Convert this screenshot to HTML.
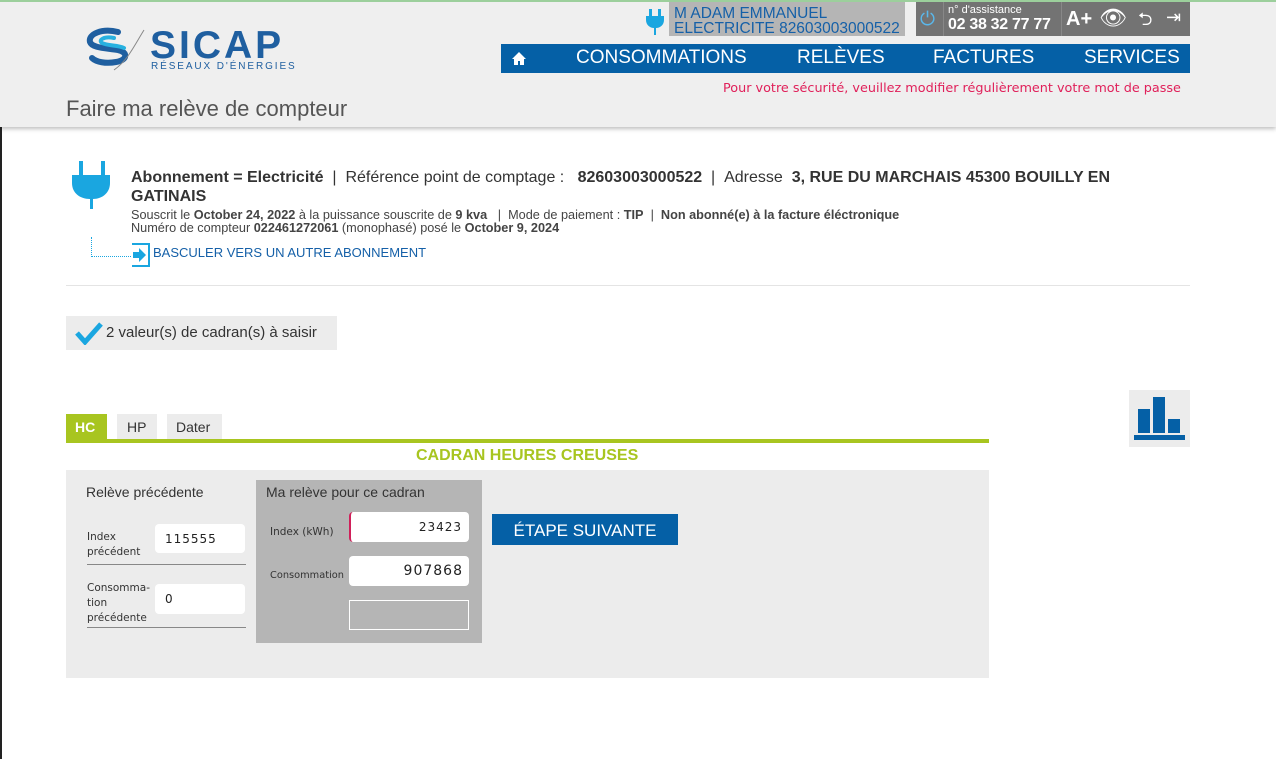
<!DOCTYPE html>
<html><head><meta charset="utf-8"><style>
*{margin:0;padding:0;box-sizing:border-box}
body{width:1276px;height:759px;background:#fff;font-family:"Liberation Sans",Arial,sans-serif;position:relative;overflow:hidden;color:#333}
.a{position:absolute}
#hdr{left:0;top:0;width:1276px;height:127px;background:#efefef;border-top:2px solid #9ccf9c;box-shadow:0 2px 4px rgba(0,0,0,.25)}
.nav{left:501px;top:44px;width:689px;height:29px;background:#0560a6;color:#fff;font-size:19px}
.nav span{position:absolute;top:3px}
.bl{left:0;top:127px;width:2px;height:632px;background:#222}
.inp{background:#fff;border-radius:4px;font-family:"DejaVu Sans",sans-serif;font-size:12px;color:#222;letter-spacing:1px}
</style></head><body>
<div id="hdr" class="a"></div>
<div class="a bl"></div>
<!-- logo -->
<svg class="a" style="left:84px;top:26px" width="70" height="46" viewBox="0 0 70 46">
<path d="M34 6 C18 2 4 8 6 16 C8 22 22 22 34 24 C44 26 44 34 32 36 C22 38 12 36 8 32" fill="none" stroke="#1f5fa0" stroke-width="6" stroke-linecap="round"/>
<path d="M30 12 C20 10 14 14 18 17 C24 20 34 19 40 22" fill="none" stroke="#27b1e0" stroke-width="4" stroke-linecap="round"/>
<path d="M60 4 C50 20 44 34 30 44" fill="none" stroke="#888" stroke-width="1"/>
</svg>
<div class="a" style="left:150px;top:24px;font-size:39px;color:#1f5fa0;letter-spacing:3px;font-weight:bold">SICAP</div>
<div class="a" style="left:151px;top:61px;font-size:10px;color:#1f5fa0;letter-spacing:1.9px">RÉSEAUX D'ÉNERGIES</div>
<div class="a" style="left:66px;top:96px;font-size:22px;color:#555">Faire ma relève de compteur</div>
<!-- plug small -->
<svg class="a" style="left:645px;top:9px" width="20" height="26" viewBox="0 0 20 26"><rect x="4" y="0" width="3" height="7" fill="#1aa6e0"/><rect x="13" y="0" width="3" height="7" fill="#1aa6e0"/><path d="M1 7h18v4c0 5-4 8-8 8v7h-2v-7c-4 0-8-3-8-8z" fill="#1aa6e0"/></svg>
<div class="a" style="left:669px;top:2px;width:236px;height:34px;background:#b5b5b5;color:#1560a8;font-size:15.5px;line-height:15px;padding:4px 0 0 5px">M ADAM EMMANUEL<br>ELECTRICITE 82603003000522</div>
<div class="a" style="left:916px;top:2px;width:274px;height:34px;background:#737373;color:#fff">
<div class="a" style="left:4px;top:7px;font-size:19px;color:#5ab8ec">⏻</div>
<div class="a" style="left:27px;top:0;width:1px;height:34px;background:#888"></div>
<div class="a" style="left:32px;top:2px;font-size:11px">n° d'assistance</div>
<div class="a" style="left:32px;top:14px;font-size:16px;font-weight:bold;letter-spacing:-0.3px">02 38 32 77 77</div>
<div class="a" style="left:145px;top:0;width:1px;height:34px;background:#888"></div>
<div class="a" style="left:150px;top:6px;font-size:20px;font-weight:bold">A+</div>
<div class="a" style="left:183px;top:3px;font-size:22px">👁</div>
<div class="a" style="left:222px;top:5px;font-size:18px">⮌</div>
<div class="a" style="left:250px;top:5px;font-size:18px">⇥</div>
</div>
<div class="a nav">
<svg class="a" style="left:11px;top:8px" width="14" height="13" viewBox="0 0 14 13"><path d="M7 0L0 7h2v6h4V9h2v4h4V7h2z" fill="#fff"/></svg>
<span style="left:75px">CONSOMMATIONS</span><span style="left:296px">RELÈVES</span><span style="left:432px">FACTURES</span><span style="left:583px">SERVICES</span></div>
<div class="a" style="left:723px;top:81px;color:#e0205a;font-family:'DejaVu Sans',sans-serif;font-size:12.8px">Pour votre sécurité, veuillez modifier régulièrement votre mot de passe</div>
<!-- subscription -->
<svg class="a" style="left:72px;top:161px" width="40" height="50" viewBox="0 0 40 50"><rect x="7" y="0" width="4" height="14" fill="#1aa6e0"/><rect x="29" y="0" width="4" height="14" fill="#1aa6e0"/><path d="M0 14h38v8c0 10-8 16-17 16v10h-3V38C8 38 0 32 0 22z" fill="#1aa6e0"/></svg>
<div class="a" style="left:131px;top:168px;width:1000px;font-size:16px;line-height:19px;color:#333"><b>Abonnement = Electricité</b> &nbsp;| &nbsp;Référence point de comptage : &nbsp;&nbsp;<b>82603003000522</b> &nbsp;| &nbsp;Adresse &nbsp;<b>3, RUE DU MARCHAIS 45300 BOUILLY EN<br>GATINAIS</b></div>
<div class="a" style="left:131px;top:209px;font-size:12.7px;line-height:13px;color:#444;white-space:nowrap">Souscrit le <b>October 24, 2022</b> à la puissance souscrite de <b>9 kva</b> &nbsp; | &nbsp;Mode de paiement : <b>TIP</b> &nbsp;| &nbsp;<b>Non abonné(e) à la facture éléctronique</b><br>Numéro de compteur <b>022461272061</b> (monophasé) posé le <b>October 9, 2024</b></div>
<div class="a" style="left:91px;top:237px;width:40px;height:20px;border-left:1px dotted #1aa6e0;border-bottom:1px dotted #1aa6e0"></div>
<svg class="a" style="left:130px;top:243px" width="22" height="24" viewBox="0 0 22 24"><path d="M2 1h17v22H2" fill="none" stroke="#1aa6e0" stroke-width="2"/><path d="M3 9h6V5l7 7-7 7v-4H3z" fill="#1aa6e0"/></svg>
<div class="a" style="left:153px;top:245px;font-size:13px;color:#1560a8">BASCULER VERS UN AUTRE ABONNEMENT</div>
<div class="a" style="left:66px;top:285px;width:1124px;height:1px;background:#e4e4e4"></div>
<div class="a" style="left:66px;top:316px;width:271px;height:34px;background:#ececec;font-size:15px;padding:8px 0 0 40px">2 valeur(s) de cadran(s) à saisir</div>
<svg class="a" style="left:75px;top:321px" width="28" height="24" viewBox="0 0 28 24"><path d="M2 12l8 9L26 3" fill="none" stroke="#1aa6e0" stroke-width="5"/></svg>
<!-- chart icon -->
<div class="a" style="left:1129px;top:390px;width:61px;height:57px;background:#ececec"></div>
<div class="a" style="left:1138px;top:409px;width:12px;height:24px;background:#0560a6"></div>
<div class="a" style="left:1153px;top:397px;width:12px;height:36px;background:#0560a6"></div>
<div class="a" style="left:1168px;top:419px;width:12px;height:14px;background:#0560a6"></div>
<div class="a" style="left:1134px;top:435px;width:51px;height:5px;background:#0560a6"></div>
<!-- tabs -->
<div class="a" style="left:66px;top:414px;width:41px;height:25px;background:#a8c520;color:#fff;font-weight:bold;font-size:14px;padding:5px 0 0 9px">HC</div>
<div class="a" style="left:117px;top:414px;width:40px;height:25px;background:#ececec;font-size:14px;padding:5px 0 0 10px">HP</div>
<div class="a" style="left:167px;top:414px;width:55px;height:25px;background:#ececec;font-size:14px;padding:5px 0 0 9px">Dater</div>
<div class="a" style="left:66px;top:439px;width:923px;height:4px;background:#a8c520"></div>
<div class="a" style="left:416px;top:447px;font-size:16px;font-weight:bold;color:#a8c520">CADRAN HEURES CREUSES</div>
<div class="a" style="left:66px;top:470px;width:923px;height:208px;background:#ececec"></div>
<div class="a" style="left:86px;top:484px;font-size:14px;color:#333">Relève précédente</div>
<div class="a" style="left:87px;top:530px;font-size:10.5px;line-height:15px;font-family:'DejaVu Sans',sans-serif;color:#333">Index<br>précédent</div>
<div class="a inp" style="left:155px;top:524px;width:90px;height:29px;padding:8px 0 0 10px">115555</div>
<div class="a" style="left:87px;top:564px;width:159px;height:1px;background:#888"></div>
<div class="a" style="left:87px;top:581px;font-size:10.5px;line-height:15px;font-family:'DejaVu Sans',sans-serif;color:#333">Consomma-<br>tion<br>précédente</div>
<div class="a inp" style="left:155px;top:584px;width:90px;height:30px;padding:8px 0 0 10px">0</div>
<div class="a" style="left:87px;top:627px;width:159px;height:1px;background:#888"></div>
<div class="a" style="left:256px;top:480px;width:226px;height:163px;background:#b5b5b5"></div>
<div class="a" style="left:266px;top:484px;font-size:14px;color:#333">Ma relève pour ce cadran</div>
<div class="a" style="left:270px;top:526px;font-size:10.5px;font-family:'DejaVu Sans',sans-serif;color:#333">Index (kWh)</div>
<div class="a inp" style="left:349px;top:512px;width:120px;height:30px;border-left:2px solid #d0205a;text-align:right;padding:8px 7px 0 0">23423</div>
<div class="a" style="left:270px;top:570px;font-size:9.8px;font-family:'DejaVu Sans',sans-serif;color:#333">Consommation</div>
<div class="a inp" style="left:349px;top:556px;width:120px;height:30px;text-align:right;padding:7px 6px 0 0;font-size:14px">907868</div>
<div class="a" style="left:349px;top:600px;width:120px;height:30px;border:1px solid #fff"></div>
<div class="a" style="left:492px;top:514px;width:186px;height:31px;background:#0560a6;color:#fff;font-size:17px;text-align:center;padding-top:7px">ÉTAPE SUIVANTE</div>
</body></html>
